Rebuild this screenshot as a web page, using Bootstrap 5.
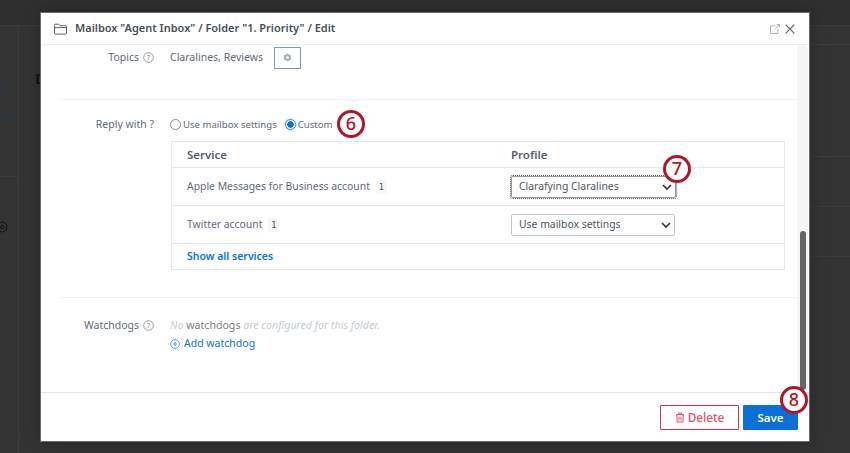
<!DOCTYPE html>
<html lang="en">
<head>
<meta charset="utf-8">
<title>Edit folder</title>
<link href="https://cdn.jsdelivr.net/npm/bootstrap@5.3.0/dist/css/bootstrap.min.css" rel="stylesheet">
<style>
html,body{height:453px;overflow:hidden}
body{background:#333;font-family:"Noto Sans","Open Sans",sans-serif;font-size:10px;color:#57636e;position:relative}
.backdrop-bits{position:absolute;inset:0}
.bg-line{position:absolute;left:0;right:0;height:1px;background:#3b3b3b}
.bg-top{position:absolute;left:0;right:0;top:0;height:25px;background:#2f2f2f}
.bg-vline{position:absolute;left:18px;top:25px;bottom:0;width:1px;background:#3b3b3b}
.bg-txt{position:absolute;color:#1d3a52;font-size:9px;line-height:12px}
.bg-d{position:absolute;left:35px;top:69px;color:#161616;font-weight:700;font-size:15px;line-height:18px}
.bg-gear{position:absolute;left:-4px;top:221px}
.dlg{position:absolute;left:41px;top:13px;width:768px;height:428px;background:#fff;display:flex;flex-direction:column;box-shadow:0 0 0 1px #6a6a6a,0 0 18px rgba(0,0,0,.25)}
.dlg-head{height:32px;flex:none;border-bottom:1px solid #e9ebee;padding:0 14px 0 13px;color:#464f57;font-size:11px;font-weight:600}
.dlg-scroll{flex:1;min-height:0;position:relative;overflow:hidden}
.track{position:absolute;right:1px;top:0;bottom:0;width:11px;background:#f4f5f7;border-radius:6px 6px 0 0}
.thumb{position:absolute;left:3px;right:2px;bottom:2px;height:159px;background:#666;border-radius:3px}
.form-wrap{width:737px;margin-left:19px}
.frow{display:flex}
.flabel{width:94px;text-align:right;flex:none;font-size:10.5px;color:#5f6b78;white-space:nowrap;display:flex;justify-content:flex-end;align-items:center;gap:4px}
.fval{margin-left:16px}
.sep{height:1px;background:#edeff1}
.topic-btn{width:27px;height:22px;border:1px solid #7e9ab5;background:#fff;display:flex;align-items:center;justify-content:center;margin-left:11px;padding:0}
.radio-dot{width:11px;height:11px;border-radius:50%;border:1px solid #8a8a8a;background:#fff;flex:none;display:inline-block}
.radio-on{border-color:#2f86e8;box-shadow:0 0 3px #8fc1f7;background:radial-gradient(circle,#0b6fdc 0 3px,#fff 3.4px)}
.opt{display:inline-flex;align-items:center;gap:2px;font-size:9.6px;color:#5f6b78;white-space:nowrap}
.opt-first{margin-right:8px}
.svc{width:614px;margin-left:111px;border:1px solid #e6e9ec;display:block;margin-top:8px}
.svc-row{display:flex;align-items:center;border-bottom:1px solid #e6e9ec;padding-left:15px}
.svc-row:last-child{border-bottom:0}
.cname{width:324px;flex:none;font-size:10.4px;color:#5f6b78;white-space:nowrap}
.chead{font-weight:600;font-size:11.5px;color:#54606b}
.cnt{display:inline-block;background:#f6f7f8;color:#464f57;font-family:"DejaVu Sans Mono","Liberation Mono",monospace;font-size:8.5px;padding:1px 3px;margin-left:3px}
.sel{width:164px;height:22px;border:1px solid #c3c8cd;border-radius:2px;background:#fff;display:flex;align-items:center;justify-content:space-between;padding:1px 3px 0 7px;font-size:10.4px;color:#4d5660}
.sel-focus{outline:1px dotted #555;outline-offset:0;border-color:#9a9a9a;width:165px}
.lnk{color:#0b73d9;text-decoration:none;font-size:10.5px;white-space:nowrap}
.lnk-b{font-weight:600}
.mute{color:#c3ccd3;font-style:italic;font-size:10.6px;white-space:nowrap}
.mute b{color:#7d7d7d;font-weight:400;font-style:normal}
.dlg-foot{height:49px;flex:none;border-top:1px solid #e3e5e7;padding:12px 11px 0 0;display:flex;justify-content:flex-end;gap:4px;align-items:flex-start}
.btn-del{width:79px;height:25px;border:1px solid #d92b4b;border-radius:1px;background:#fff;color:#e2506b;font-size:11.8px;font-weight:500;display:flex;align-items:center;justify-content:center;gap:3px;padding:0}
.btn-sv{width:55px;height:25px;border:0;border-radius:1px;background:#0b6fd6;color:#fff;font-size:11.5px;font-weight:600;padding:0}
.callout{position:absolute;width:28px;height:28px;border-radius:50%;border:3px solid #b0152a;background:#fff;color:#b0152a;font-size:18px;line-height:21px;text-align:center;font-weight:500}
</style>
</head>
<body>
<div class="backdrop-bits">
<div class="bg-top"></div>
<div class="bg-line" style="top:25px"></div>
<div class="bg-vline"></div>
<div class="bg-line" style="top:176px;right:832px"></div>
<div class="bg-line" style="top:44px;left:809px"></div>
<div class="bg-line" style="top:156px;left:809px"></div>
<div class="bg-line" style="top:206px;left:809px"></div>
<div class="bg-line" style="top:256px;left:809px"></div>
<span class="bg-txt" style="left:0;top:83px">.0</span>
<span class="bg-txt" style="left:1px;top:111px">.8</span>
<span class="bg-d">D</span>
<svg class="bg-gear" width="12" height="12" viewBox="0 0 12 12" fill="none" stroke="#161616" stroke-width="1"><path d="M6 .7 10.6 3.3v5.4L6 11.3 1.4 8.7V3.3Z"/><circle cx="6" cy="6" r="1.8"/></svg>
</div>
<div class="dlg">
 <div class="dlg-head d-flex align-items-center">
  <svg width="13" height="12" viewBox="0 0 14 12" fill="none" stroke="#4b545c" stroke-width="1" class="me-2"><path d="M.5 2V10.5a1 1 0 0 0 1 1h11a1 1 0 0 0 1-1V3.5a1 1 0 0 0-1-1H6.5L5 .8H1.5a1 1 0 0 0-1 1.2Z"/><path d="M.5 4.5h13"/></svg>
  <span>Mailbox "Agent Inbox" / Folder "1. Priority" / Edit</span>
  <span class="ms-auto d-flex align-items-center gap-1">
   <svg width="10" height="10" viewBox="0 0 10 10" fill="none" stroke="#a9b1b8" stroke-width="1"><path d="M5.5 2H.5v7.5H8V5"/><path d="M5 5.2 9.3.8M6.8.5h2.7v2.7"/></svg>
   <svg width="10" height="10" viewBox="0 0 10 10" fill="none" stroke="#5b646d" stroke-width="1.2" style="margin-left:1px"><path d="M.7.7l8.6 8.6M9.3.7.7 9.3"/></svg>
  </span>
 </div>
 <div class="dlg-scroll">
  <div class="track"><div class="thumb"></div></div>
  <div class="form-wrap">
   <div class="frow align-items-center" style="height:23px;margin-top:1px">
    <div class="flabel">Topics
     <svg width="11" height="11" viewBox="0 0 11 11"><circle cx="5.5" cy="5.5" r="4.8" fill="none" stroke="#7b848c" stroke-width=".8"/><text x="5.5" y="8" text-anchor="middle" font-size="7" fill="#7b848c">?</text></svg>
    </div>
    <div class="fval d-flex align-items-center"><span style="font-size:10.5px;color:#5f6b78">Claralines, Reviews</span>
     <button class="topic-btn" type="button"><svg width="9" height="9" viewBox="0 0 9 9"><path d="M4.5.4 8.1 2.5v4L4.5 8.6.9 6.5v-4Z" fill="#a8b2bb"/><circle cx="4.5" cy="4.5" r="1.3" fill="#fff"/></svg></button>
    </div>
   </div>
   <div class="sep" style="margin-top:30px"></div>
   <div class="frow align-items-center" style="margin-top:17px;height:16px">
    <div class="flabel">Reply with ?</div>
    <div class="fval d-flex align-items-center">
     <span class="opt opt-first"><span class="radio-dot"></span>Use mailbox settings</span>
     <span class="opt"><span class="radio-dot radio-on"></span>Custom</span>
    </div>
   </div>
   <div class="svc">
    <div class="svc-row" style="height:26px"><div class="cname chead">Service</div><div class="chead">Profile</div></div>
    <div class="svc-row" style="height:38px"><div class="cname">Apple Messages for Business account <span class="cnt">1</span></div>
     <div class="sel sel-focus"><span>Clarafying Claralines</span><svg width="10" height="7" viewBox="0 0 10 7" fill="none" stroke="#2f3840" stroke-width="1.7"><path d="M1 1l4 4 4-4"/></svg></div></div>
    <div class="svc-row" style="height:38px"><div class="cname">Twitter account <span class="cnt">1</span></div>
     <div class="sel"><span>Use mailbox settings</span><svg width="10" height="7" viewBox="0 0 10 7" fill="none" stroke="#2f3840" stroke-width="1.7"><path d="M1 1l4 4 4-4"/></svg></div></div>
    <div class="svc-row" style="height:25px"><a class="lnk lnk-b" href="#">Show all services</a></div>
   </div>
   <div class="sep" style="margin-top:27px"></div>
   <div class="frow" style="margin-top:20px">
    <div class="flabel" style="height:15px">Watchdogs
     <svg width="11" height="11" viewBox="0 0 11 11"><circle cx="5.5" cy="5.5" r="4.8" fill="none" stroke="#7b848c" stroke-width=".8"/><text x="5.5" y="8" text-anchor="middle" font-size="7" fill="#7b848c">?</text></svg>
    </div>
    <div class="fval">
     <div class="mute" style="height:18px;line-height:15px">No <b>watchdogs</b> are configured for this folder.</div>
     <a class="lnk d-flex align-items-center gap-1" href="#"><svg width="10" height="10" viewBox="0 0 10 10" fill="none" stroke="#2f86e8" stroke-width=".8"><circle cx="5" cy="5" r="4.4"/><path d="M2.8 5h4.4M5 2.8v4.4"/></svg>Add watchdog</a>
    </div>
   </div>
  </div>
 </div>
 <div class="dlg-foot">
  <button class="btn-del" type="button"><svg width="10" height="11" viewBox="0 0 10 11" fill="none" stroke="#e2506b" stroke-width="1"><path d="M1 2.5h8M3.5 2.5V1h3v1.5M2 2.5v7.5h6V2.5M4 4.5v4M6 4.5v4"/></svg> Delete</button>
  <button class="btn-sv" type="button">Save</button>
 </div>
</div>
<span class="callout" style="left:337px;top:110px">6</span>
<span class="callout" style="left:663px;top:155px">7</span>
<span class="callout" style="left:780px;top:386px">8</span>
<script src="https://cdn.jsdelivr.net/npm/bootstrap@5.3.0/dist/js/bootstrap.bundle.min.js"></script>
</body>
</html>
